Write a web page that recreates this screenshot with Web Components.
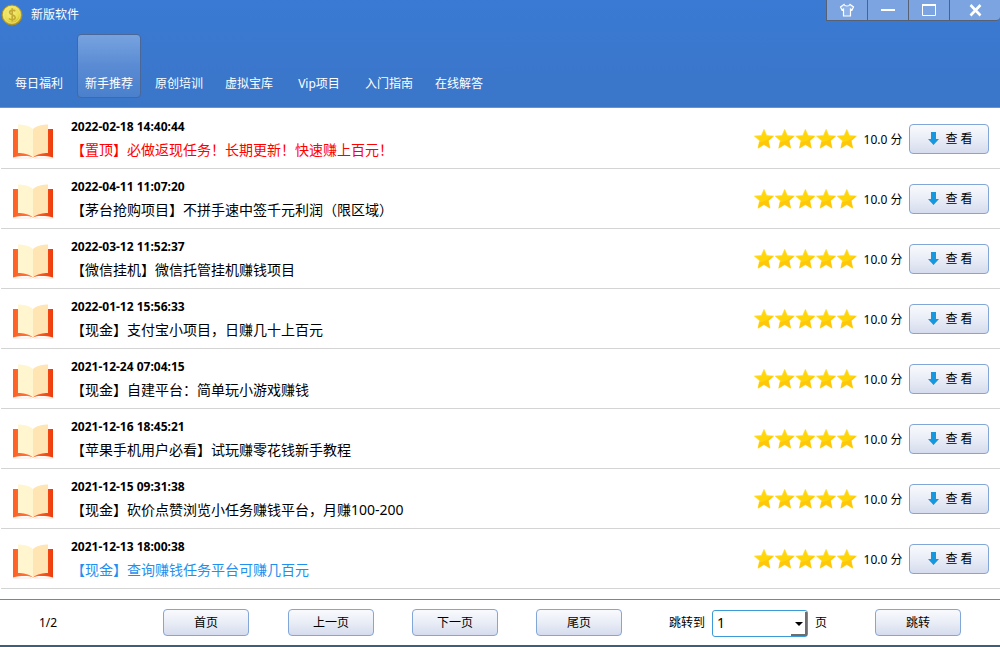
<!DOCTYPE html>
<html lang="zh-CN">
<head>
<meta charset="utf-8">
<title>新版软件</title>
<style>
  html { height: 100%; }
  body {
    margin: 0;
    min-height: 100%;
    font: 12px/20px "Noto Sans", "Noto Sans CJK SC", sans-serif;
    color: #000;
    background: #fff;
  }
</style>
</head>
<body>
<app-window></app-window>

<script>
const define = (name, html, setup) => {
  const template = document.createElement('template');
  template.innerHTML = html;
  customElements.define(name, class extends HTMLElement {
    connectedCallback() {
      if (this.shadowRoot) return;
      const root = this.attachShadow({ mode: 'open' });
      root.append(template.content.cloneNode(true));
      if (setup) setup(this, root);
    }
  });
};

/* Gold coin with a dollar mark */
define('coin-icon', `
  <style>:host { display: block; width: 22px; height: 22px; } svg { display: block; width: 100%; height: 100%; }</style>
  <svg viewBox="0 0 22 22" aria-hidden="true">
    <defs><radialGradient id="g" cx=".45" cy=".4" r=".6">
      <stop offset="0" stop-color="#f7ee8c"/><stop offset=".65" stop-color="#e9dc4a"/><stop offset="1" stop-color="#b89c18"/>
    </radialGradient></defs>
    <circle cx="11" cy="11" r="10" fill="url(#g)" stroke="#a8902a"/>
    <circle cx="11" cy="11" r="8.2" fill="none" stroke="#f6f08e" stroke-width=".7"/>
    <path d="M14.200 7.200C12.800 5.600 8.600 6 8.600 8.400c0 2.600 5.600 2.200 5.600 5 0 2.600-4.400 3-6.200 1.100M11.200 4.200v13.400" fill="none" stroke="#c4ac34" stroke-width="1.700"/>
  </svg>`);

define('book-icon', `
  <style>:host { display: block; width: 42px; height: 36px; } svg { display: block; width: 100%; height: 100%; }</style>
  <svg viewBox="0 0 42 36" aria-hidden="true">
    <defs>
      <linearGradient id="l"><stop offset="0" stop-color="#ff6024"/><stop offset="1" stop-color="#ff7a3c"/></linearGradient>
      <linearGradient id="r"><stop offset="0" stop-color="#ff6a2c"/><stop offset="1" stop-color="#ee3c0c"/></linearGradient>
    </defs>
    <path d="M1 34.500h17l3 1 3-1h17v1H1z" fill="#f7d9ca" opacity=".6"/>
    <path d="M1 6h20v28.500c-3-1.500-5-1.500-8-1.500-4.500 0-8 .3-12 1.500z" fill="url(#l)"/>
    <path d="M41 6H21v28.500c3-1.500 5-1.500 8-1.500 4.500 0 8 .3 12 1.500z" fill="url(#r)"/>
    <path d="M6 1.500c5 .2 11 .8 15 4.500v28.500c-4-3.500-10-4.300-15-4.500z" fill="#fff5cf"/>
    <path d="M36 1.500c-5 .2-11 .8-15 4.500v28.500c4-3.500 10-4.300 15-4.500z" fill="#ffe5b4"/>
  </svg>`);

define('star-rating', `
  <style>:host { display: flex; } svg { display: block; width: 104px; height: 22px; }</style>
  <svg viewBox="0 0 104 22" role="img" aria-label="5 / 5">
    <defs>
      <g id="s">
        <path d="M11 1.300l2.700 6.200 7 .6-5.300 4.600 1.600 7.500-6-3.600-6 3.600 1.600-7.500L1.300 8.100l7-.6z" fill="#ffd60a" stroke="#ffde30" stroke-width=".6" stroke-linejoin="round"/>
        <path d="M20.200 8.500l-4.800 4.200 1.600 7.500-6-3.600-6 3.600 1.300-6C11 14 15.500 11.500 18 8.300z" fill="#ffc70a"/>
      </g>
    </defs>
    <use href="#s"/><use href="#s" x="20.700"/><use href="#s" x="41.400"/><use href="#s" x="62.100"/><use href="#s" x="82.800"/>
  </svg>`);

define('soft-button', `
  <style>
    :host { display: block; width: 86px; height: 27px; }
    button {
      display: flex; align-items: center; justify-content: center;
      box-sizing: border-box; width: 100%; height: 100%;
      margin: 0; padding: 0;
      font: inherit; color: inherit;
      border: 1px solid #82a6d6; border-radius: 4px;
      background: linear-gradient(#f9fafd, #e9edf6 50%, #d6dcee);
    }
  </style>
  <button type="button"><slot></slot></button>`);

define('nav-tab', `
  <style>
    :host { display: block; width: 64px; height: 64px; }
    a {
      display: flex; align-items: flex-end; justify-content: center;
      box-sizing: border-box; width: 100%; height: 100%; padding-bottom: 3px;
      border: 1px solid transparent; border-radius: 4px;
      color: #fff; text-decoration: none; white-space: nowrap;
    }
    :host([active]) a {
      border-color: #4a6798;
      background: linear-gradient(#77a3df, #5a8bd3 50%, #4a80cc);
    }
  </style>
  <a href="#"><slot></slot></a>`, (host, root) => {
    if (host.hasAttribute('active')) root.querySelector('a').setAttribute('aria-current', 'page');
  });

define('window-controls', `
  <style>
    :host { display: flex; height: 21px; }
    button {
      display: flex; align-items: center; justify-content: center;
      box-sizing: border-box; width: 41px; height: 100%; margin: 0; padding: 0;
      border: solid #566174; border-width: 0 0 1px 1px; border-radius: 0;
      background: #7ba4e0;
    }
    button:last-child { width: 51px; border-bottom-right-radius: 4px; }
    svg { display: block; width: 18px; height: 16px; fill: none; stroke: #fff; }
  </style>
  <button type="button" aria-label="换肤"><svg viewBox="0 0 18 16"><path d="M6 2.500L2.500 5l1.500 3 1.500-1v7h7V7l1.500 1 1.500-3L12 2.500C11 4.500 7 4.500 6 2.500z" stroke-width="1.200" fill="#8fb3e8"/></svg></button>
  <button type="button" aria-label="最小化"><svg viewBox="0 0 18 16"><path d="M2 8h14" stroke-width="2"/></svg></button>
  <button type="button" aria-label="最大化"><svg viewBox="0 0 18 16"><path d="M2.500 3v10.500h13V3" stroke-width="1"/><path d="M2 3h14" stroke-width="2"/></svg></button>
  <button type="button" aria-label="关闭"><svg viewBox="0 0 18 16"><path d="M4.500 3l10 10.500M14.500 3l-10 10.500" stroke-width="2.600"/></svg></button>`);

define('app-header', `
  <style>
    :host {
      display: block; box-sizing: border-box; height: 108px;
      color: #fff; border-bottom: 1px solid #7f8fa9;
      background: linear-gradient(#3a7ad4, #3a76c8);
    }
    .bar { display: flex; justify-content: space-between; height: 34px; }
    .brand { display: flex; align-items: center; gap: 8px; height: 29px; padding-left: 1px; }
    h1 { margin: 0; font-size: 12px; font-weight: 400; line-height: 20px; }
    nav { display: flex; gap: 6px; padding-left: 7px; }
  </style>
  <div class="bar">
    <div class="brand"><coin-icon></coin-icon><h1>新版软件</h1></div>
    <window-controls></window-controls>
  </div>
  <nav>
    <nav-tab>每日福利</nav-tab>
    <nav-tab active>新手推荐</nav-tab>
    <nav-tab>原创培训</nav-tab>
    <nav-tab>虚拟宝库</nav-tab>
    <nav-tab>Vip项目</nav-tab>
    <nav-tab>入门指南</nav-tab>
    <nav-tab>在线解答</nav-tab>
  </nav>`);

define('task-row', `
  <style>
    :host {
      display: flex; align-items: center;
      box-sizing: border-box; height: 60px; padding: 0 11px;
      border-bottom: 1px solid #d4d4d4;
    }
    book-icon { margin-top: 4px; }
    .text { flex: 1; min-width: 0; margin-left: 17px; }
    time { display: block; font-weight: 700; line-height: 22px; }
    h2 {
      margin: 0; font-size: 14px; font-weight: 400; line-height: 24px;
      color: var(--title-color, #000); white-space: nowrap;
    }
    .score { margin: 0 6px; width: 40px; padding-top: 2px; text-align: center; white-space: nowrap; }
    star-rating { padding-top: 1px; }
    soft-button { width: 80px; height: 30px; }
    .view { display: flex; align-items: center; gap: 6px; padding-left: 3px; word-spacing: normal; }
    .view svg { width: 11px; height: 15px; }
  </style>
  <book-icon></book-icon>
  <div class="text">
    <time><slot name="time"></slot></time>
    <h2><slot></slot></h2>
  </div>
  <star-rating></star-rating>
  <div class="score">10.0 分</div>
  <soft-button><span class="view"><svg viewBox="0 0 11 15" aria-hidden="true"><path d="M3 1h5v7h3l-5.500 6L0 8h3z" fill="#1697de"/></svg>查 看</span></soft-button>`);

define('task-list', `
  <style>:host { display: block; padding: 1px 0 10px 1px; }</style>
  <slot></slot>`);

define('page-bar', `
  <style>
    :host {
      display: grid; align-items: center;
      grid-template-columns: 124fr 125fr 124fr 124fr 133fr 206fr 125fr;
      box-sizing: border-box; height: 48px; padding-left: 39px;
      border-top: 1px solid #80848f; border-bottom: 2px solid #3d5f78;
      background: #fff;
    }
    .jump { display: flex; align-items: center; }
    .pages, .jump { padding-top: 1px; }
    select {
      appearance: none; box-sizing: border-box;
      width: 96px; height: 27px; margin: 0 7px; padding: 0 20px 0 4px;
      font: inherit; font-size: 14px; color: #000;
      border: 1px solid #3c9ad8; border-radius: 3px; background: #fff;
    }
    .combo { position: relative; display: flex; }
    .drop {
      position: absolute; right: 8px; bottom: 1px;
      box-sizing: border-box; width: 16px; height: 24px;
      border: solid #6e6e6e; border-width: 0 2px 2px 0;
      pointer-events: none;
    }
    .drop svg { display: block; width: 8px; height: 4px; margin: 10px 0 0 4px; }
  </style>
  <div class="pages">1/2</div>
  <soft-button>首页</soft-button>
  <soft-button>上一页</soft-button>
  <soft-button>下一页</soft-button>
  <soft-button>尾页</soft-button>
  <div class="jump">
    <label for="page">跳转到</label>
    <div class="combo">
      <select id="page"><option>1</option><option>2</option></select>
      <span class="drop"><svg viewBox="0 0 8 4" aria-hidden="true"><path d="M0 0h8L4 4z"/></svg></span>
    </div>
    <span>页</span>
  </div>
  <soft-button>跳转</soft-button>`);

const tasks = [
  ['2022-02-18 14:40:44', '【置顶】必做返现任务！长期更新！快速赚上百元！', '#ff0000'],
  ['2022-04-11 11:07:20', '【茅台抢购项目】不拼手速中签千元利润（限区域）'],
  ['2022-03-12 11:52:37', '【微信挂机】微信托管挂机赚钱项目'],
  ['2022-01-12 15:56:33', '【现金】支付宝小项目，日赚几十上百元'],
  ['2021-12-24 07:04:15', '【现金】自建平台：简单玩小游戏赚钱'],
  ['2021-12-16 18:45:21', '【苹果手机用户必看】试玩赚零花钱新手教程'],
  ['2021-12-15 09:31:38', '【现金】砍价点赞浏览小任务赚钱平台，月赚100-200'],
  ['2021-12-13 18:00:38', '【现金】查询赚钱任务平台可赚几百元', '#1e90f0']
];

define('app-window', `
  <style>
    :host { display: flex; flex-direction: column; min-height: 100vh; }
    task-list { flex: 1; }
  </style>
  <app-header></app-header>
  <task-list></task-list>
  <page-bar></page-bar>`, (host, root) => {
    const list = root.querySelector('task-list');
    for (const [time, title, color] of tasks) {
      const row = document.createElement('task-row');
      const stamp = document.createElement('span');
      stamp.slot = 'time';
      stamp.textContent = time;
      row.append(stamp, title);
      if (color) row.style.setProperty('--title-color', color);
      list.append(row);
    }
  });
</script>
</body>
</html>
